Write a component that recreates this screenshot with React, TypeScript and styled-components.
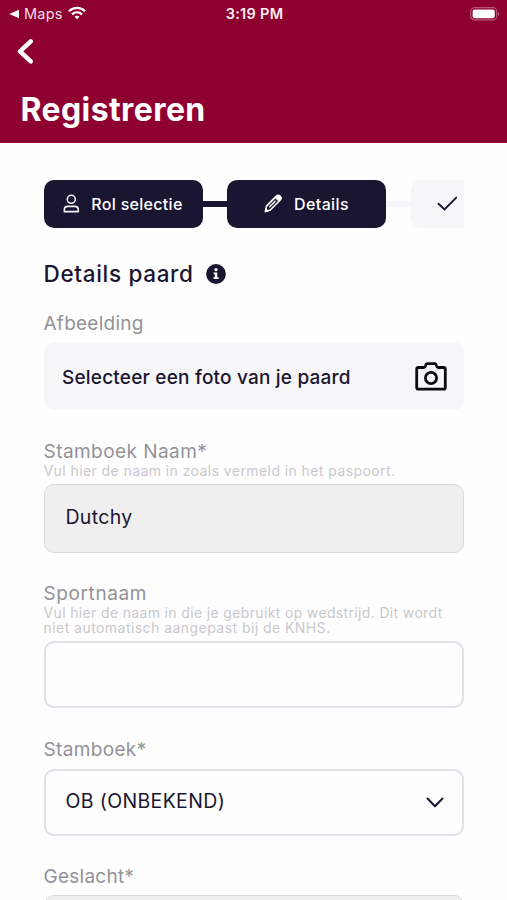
import React from "react";
import styled, { createGlobalStyle } from "styled-components";

const ink = "#1a1530";
const crimson = "#8e0030";

const GlobalStyle = createGlobalStyle`
  *, *::before, *::after { box-sizing: border-box; }
  body {
    margin: 0;
    background: #fefefe;
    color: ${ink};
    font-family: Inter, "Noto Sans", sans-serif;
  }
`;

const Screen = styled.div`
  width: 507px;
  height: 900px;
  overflow: hidden;
  background: #fefefe;
`;

const Header = styled.header`
  height: 142.5px;
  background: ${crimson};
  color: #fff;
`;

const StatusBar = styled.div`
  display: grid;
  grid-template-columns: 1fr auto 1fr;
  align-items: center;
  height: 27px;
  padding: 0 7px 0 9px;
`;

const BackToApp = styled.div`
  display: flex;
  align-items: center;
  color: #f3dce5;
  font-size: 14.5px;
  line-height: 27px;
  letter-spacing: 0.2px;
  svg:first-child { margin-right: 5px; }
  svg:last-child { margin: -1px 0 0 5px; }
`;

const Clock = styled.time`
  font-size: 14.5px;
  line-height: 27px;
  font-weight: 600;
  letter-spacing: 0.3px;
  color: #fbedf2;
`;

const BatterySlot = styled.div`
  display: flex;
  justify-content: flex-end;
`;

const BackButton = styled.button`
  display: block;
  padding: 0;
  margin: 12px 0 0 17px;
  border: 0;
  background: none;
  height: 25px;
  svg { display: block; }
`;

const Title = styled.h1`
  margin: 26px 0 0 20.5px;
  font-size: 32px;
  font-weight: 650;
  line-height: 40px;
  letter-spacing: 0.4px;
`;

const Content = styled.main`
  padding: 37px 43px 0 43.5px;
`;

const Steps = styled.nav`
  display: flex;
  align-items: center;
  overflow: hidden;
  height: 48.5px;
`;

const Step = styled.div<{ $pending?: boolean }>`
  display: flex;
  align-items: center;
  justify-content: ${(p) => (p.$pending ? "flex-start" : "center")};
  flex: 0 0 159px;
  height: 100%;
  padding-left: ${(p) => (p.$pending ? "26px" : "0")};
  border-radius: 10px;
  background: ${(p) => (p.$pending ? "#f6f6f9" : ink)};
  color: ${(p) => (p.$pending ? ink : "#fff")};
`;

const StepLabel = styled.span<{ $gap: number; $spacing: number }>`
  margin-left: ${(p) => p.$gap}px;
  font-size: 16px;
  font-weight: 500;
  letter-spacing: ${(p) => p.$spacing}px;
`;

const Connector = styled.div<{ $pending?: boolean }>`
  flex: 0 0 24.5px;
  height: 6px;
  background: ${(p) => (p.$pending ? "#f7f7f9" : ink)};
`;

const SectionHeading = styled.div`
  display: flex;
  align-items: center;
  height: 30px;
  margin-top: 31px;
  gap: 12.5px;
`;

const SectionTitle = styled.h2`
  margin: 0;
  font-size: 22.5px;
  font-weight: 550;
  line-height: 30px;
  letter-spacing: 0.68px;
`;

const Field = styled.section<{ $top: number }>`
  margin-top: ${(p) => p.$top}px;
`;

const Label = styled.label<{ $spacing?: number }>`
  display: block;
  height: 24px;
  font-size: 19px;
  line-height: 24px;
  letter-spacing: ${(p) => p.$spacing ?? 0}px;
  color: #939298;
`;

const Hint = styled.p`
  margin: -1px 0 0;
  font-size: 14px;
  line-height: 15px;
  color: #c9c8cd;
`;

const HintLine = styled.span<{ $spacing: number }>`
  display: block;
  white-space: nowrap;
  letter-spacing: ${(p) => p.$spacing}px;
`;

const Upload = styled.button`
  display: flex;
  align-items: center;
  justify-content: space-between;
  width: 420.5px;
  height: 68px;
  margin-top: 6px;
  padding: 0 17px 0 18.5px;
  border: 0;
  border-radius: 10px;
  background: #f6f6f9;
  color: ${ink};
  font: 450 19px/28px Inter, sans-serif;
  letter-spacing: 0.2px;
`;

const UploadText = styled.span`
  padding-top: 3px;
`;

const Control = styled.div<{ $top: number; $disabled?: boolean }>`
  display: flex;
  align-items: center;
  justify-content: space-between;
  width: 420.5px;
  height: ${(p) => (p.$disabled ? 68.5 : 67)}px;
  margin-top: ${(p) => p.$top}px;
  padding: 0 18.5px 2px ${(p) => (p.$disabled ? 21 : 20)}px;
  border: ${(p) => (p.$disabled ? "1.5px solid #dadadc" : "2px solid #e1e0e9")};
  border-radius: 10px;
  background: ${(p) => (p.$disabled ? "#efefef" : "#fefefe")};
  svg { margin-top: 3px; }
`;

const Value = styled.span<{ $spacing: number }>`
  font-size: 19.5px;
  font-weight: 400;
  line-height: 24px;
  letter-spacing: ${(p) => p.$spacing}px;
`;

const WifiIcon = () => (
  <svg width="18" height="14" viewBox="0 0 18 14" fill="none" stroke="#fff" strokeWidth="2.3">
    <path d="M1 5.2C5.5.8 12.5.8 17 5.2" />
    <path d="M4 8.3C6.9 5.6 11.1 5.6 14 8.3" />
    <path d="M6.5 10.7Q9 8.6 11.5 10.7L9 13.3Z" fill="#fff" stroke="none" />
  </svg>
);

const BatteryIcon = () => (
  <svg width="30" height="14" viewBox="0 0 30 14">
    <rect x=".7" y=".7" width="26" height="12.2" rx="4" fill="none" stroke="#b8557f" strokeWidth="1.2" />
    <rect x="2.6" y="2.4" width="22.2" height="8.8" rx="2.3" fill="#fff" />
    <path d="M28 5v4q1.5-.5 1.5-2T28 5Z" fill="#b8557f" />
  </svg>
);

const PersonIcon = () => (
  <svg width="17" height="19" viewBox="0 0 17 19" fill="none" stroke="#f4f2f8" strokeWidth="1.6" strokeLinejoin="round">
    <circle cx="8.3" cy="5.3" r="4" />
    <path d="M1.3 17.6v-1.8c0-2.1 1.5-3.4 3.5-3.4h7c2 0 3.5 1.3 3.5 3.4v1.8Z" />
  </svg>
);

const PencilIcon = () => (
  <svg width="19" height="19" viewBox="0 0 19 19" fill="none" stroke="#fff" strokeWidth="1.7" strokeLinejoin="round" strokeLinecap="round">
    <path d="M1.4 17.5 2.5 12.2 12.4 2.2q1.8-1.7 3.6 0t.2 3.8L6.3 16Z" />
    <path d="m11.2 3.7 3.6 3.6 1.8-1.8q1.2-1.7-.4-3.2t-3.2-.4Z" fill="#fff" strokeWidth="1" />
    <path d="m5.7 12.7 5.5-5.5" strokeWidth="1.4" />
    <path d="m1.4 17.5.6-2.7 2.1 2.1Z" fill="#fff" strokeWidth="1" />
  </svg>
);

const CheckIcon = () => (
  <svg width="21" height="16" viewBox="0 0 21 16" fill="none" stroke={ink} strokeWidth="1.9" strokeLinecap="round">
    <path d="m1.5 7.8 6 5.6L19.2 1.6" />
  </svg>
);

const InfoIcon = () => (
  <svg width="20" height="20" viewBox="0 0 20 20">
    <circle cx="10" cy="10" r="9.9" fill={ink} />
    <circle cx="10" cy="5.7" r="1.6" fill="#fff" />
    <path d="M7.6 8.4h3.7v4.9h1.3v1.8H7.5v-1.8h1.3v-3.1H7.6Z" fill="#fff" />
  </svg>
);

const CameraIcon = () => (
  <svg width="32" height="29" viewBox="0 0 32 29" fill="none" stroke="#0c0b10" strokeWidth="2.8" strokeLinejoin="round">
    <path d="M3.4 5.5h5.4q1.4 0 1.8-1.7.4-2.1 1.8-2.1h7.2q1.4 0 1.8 2.1.4 1.7 1.8 1.7h5.4q1.7 0 1.7 1.7v18.3q0 1.7-1.7 1.7H3.4q-1.7 0-1.7-1.7V7.2q0-1.7 1.7-1.7Z" />
    <circle cx="16" cy="16" r="5.6" />
  </svg>
);

export default function App() {
  return (
    <>
      <GlobalStyle />
      <Screen>
        <Header>
          <StatusBar>
            <BackToApp>
              <svg width="10" height="10" viewBox="0 0 10 10"><path d="M.3 5 10 .8v8.4Z" fill="#fff" /></svg>
              Maps
              <WifiIcon />
            </BackToApp>
            <Clock>3:19 PM</Clock>
            <BatterySlot><BatteryIcon /></BatterySlot>
          </StatusBar>
          <BackButton aria-label="Terug">
            <svg width="17" height="25" viewBox="0 0 17 25" fill="none" stroke="#fff" strokeWidth="4.5" strokeLinecap="round" strokeLinejoin="round">
              <path d="M13.7 2.4 3 12.4l10.7 10" />
            </svg>
          </BackButton>
          <Title>Registreren</Title>
        </Header>
        <Content>
          <Steps>
            <Step><PersonIcon /><StepLabel $gap={11} $spacing={0.3}>Rol selectie</StepLabel></Step>
            <Connector />
            <Step><PencilIcon /><StepLabel $gap={11} $spacing={0.38}>Details</StepLabel></Step>
            <Connector $pending />
            <Step $pending><CheckIcon /></Step>
          </Steps>
          <SectionHeading>
            <SectionTitle>Details paard</SectionTitle>
            <InfoIcon />
          </SectionHeading>
          <Field $top={23}>
            <Label $spacing={0.25}>Afbeelding</Label>
            <Upload><UploadText>Selecteer een foto van je paard</UploadText><CameraIcon /></Upload>
          </Field>
          <Field $top={30}>
            <Label $spacing={0.45}>Stamboek Naam*</Label>
            <Hint><HintLine $spacing={0.42}>Vul hier de naam in zoals vermeld in het paspoort.</HintLine></Hint>
            <Control $top={6} $disabled><Value $spacing={0.3}>Dutchy</Value></Control>
          </Field>
          <Field $top={29.5}>
            <Label $spacing={0.6}>Sportnaam</Label>
            <Hint>
              <HintLine $spacing={0.35}>Vul hier de naam in die je gebruikt op wedstrijd. Dit wordt</HintLine>
              <HintLine $spacing={0.45}>niet automatisch aangepast bij de KNHS.</HintLine>
            </Hint>
            <Control $top={6} />
          </Field>
          <Field $top={30}>
            <Label $spacing={0.35}>Stamboek*</Label>
            <Control $top={6.5}>
              <Value $spacing={0.35}>OB (ONBEKEND)</Value>
              <svg width="18" height="11" viewBox="0 0 18 11" fill="none" stroke={ink} strokeWidth="2" strokeLinecap="round" strokeLinejoin="round">
                <path d="m1.5 1.5 7.5 7.7 7.5-7.7" />
              </svg>
            </Control>
          </Field>
          <Field $top={29.5}>
            <Label $spacing={0.25}>Geslacht*</Label>
            <Control $top={5.5} $disabled />
          </Field>
        </Content>
      </Screen>
    </>
  );
}
